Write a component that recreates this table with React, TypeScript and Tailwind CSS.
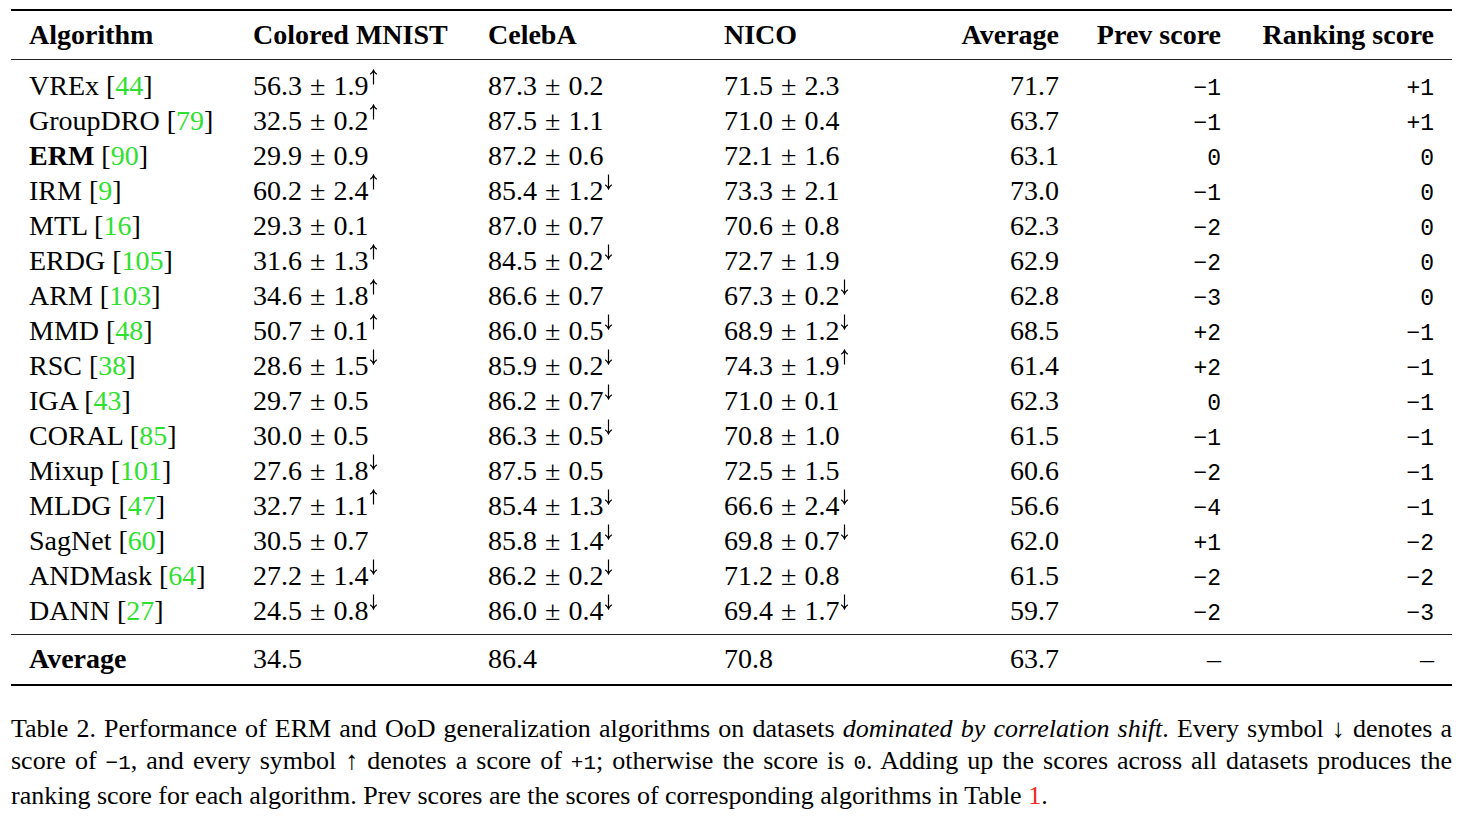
import React from "react";

type Arrow = "" | "u" | "d";
type Row = {
  name: string;
  ref: string;
  bold?: boolean;
  c1: string;
  a1: Arrow;
  c2: string;
  a2: Arrow;
  c3: string;
  a3: Arrow;
  avg: string;
  prev: string;
  rank: string;
};

const rows: Row[] = [
  { name: "VREx", ref: "44", c1: "56.3", a1: "u", c2: "87.3", a2: "", c3: "71.5", a3: "", avg: "71.7", prev: "−1", rank: "+1" },
  { name: "GroupDRO", ref: "79", c1: "32.5", a1: "u", c2: "87.5", a2: "", c3: "71.0", a3: "", avg: "63.7", prev: "−1", rank: "+1" },
  { name: "ERM", ref: "90", bold: true, c1: "29.9", a1: "", c2: "87.2", a2: "", c3: "72.1", a3: "", avg: "63.1", prev: "0", rank: "0" },
  { name: "IRM", ref: "9", c1: "60.2", a1: "u", c2: "85.4", a2: "d", c3: "73.3", a3: "", avg: "73.0", prev: "−1", rank: "0" },
  { name: "MTL", ref: "16", c1: "29.3", a1: "", c2: "87.0", a2: "", c3: "70.6", a3: "", avg: "62.3", prev: "−2", rank: "0" },
  { name: "ERDG", ref: "105", c1: "31.6", a1: "u", c2: "84.5", a2: "d", c3: "72.7", a3: "", avg: "62.9", prev: "−2", rank: "0" },
  { name: "ARM", ref: "103", c1: "34.6", a1: "u", c2: "86.6", a2: "", c3: "67.3", a3: "d", avg: "62.8", prev: "−3", rank: "0" },
  { name: "MMD", ref: "48", c1: "50.7", a1: "u", c2: "86.0", a2: "d", c3: "68.9", a3: "d", avg: "68.5", prev: "+2", rank: "−1" },
  { name: "RSC", ref: "38", c1: "28.6", a1: "d", c2: "85.9", a2: "d", c3: "74.3", a3: "u", avg: "61.4", prev: "+2", rank: "−1" },
  { name: "IGA", ref: "43", c1: "29.7", a1: "", c2: "86.2", a2: "d", c3: "71.0", a3: "", avg: "62.3", prev: "0", rank: "−1" },
  { name: "CORAL", ref: "85", c1: "30.0", a1: "", c2: "86.3", a2: "d", c3: "70.8", a3: "", avg: "61.5", prev: "−1", rank: "−1" },
  { name: "Mixup", ref: "101", c1: "27.6", a1: "d", c2: "87.5", a2: "", c3: "72.5", a3: "", avg: "60.6", prev: "−2", rank: "−1" },
  { name: "MLDG", ref: "47", c1: "32.7", a1: "u", c2: "85.4", a2: "d", c3: "66.6", a3: "d", avg: "56.6", prev: "−4", rank: "−1" },
  { name: "SagNet", ref: "60", c1: "30.5", a1: "", c2: "85.8", a2: "d", c3: "69.8", a3: "d", avg: "62.0", prev: "+1", rank: "−2" },
  { name: "ANDMask", ref: "64", c1: "27.2", a1: "d", c2: "86.2", a2: "d", c3: "71.2", a3: "", avg: "61.5", prev: "−2", rank: "−2" },
  { name: "DANN", ref: "27", c1: "24.5", a1: "d", c2: "86.0", a2: "d", c3: "69.4", a3: "d", avg: "59.7", prev: "−2", rank: "−3" },
];

const sds: string[][] = [
  ["1.9", "0.2", "2.3"],
  ["0.2", "1.1", "0.4"],
  ["0.9", "0.6", "1.6"],
  ["2.4", "1.2", "2.1"],
  ["0.1", "0.7", "0.8"],
  ["1.3", "0.2", "1.9"],
  ["1.8", "0.7", "0.2"],
  ["0.1", "0.5", "1.2"],
  ["1.5", "0.2", "1.9"],
  ["0.5", "0.7", "0.1"],
  ["0.5", "0.5", "1.0"],
  ["1.8", "0.5", "1.5"],
  ["1.1", "1.3", "2.4"],
  ["0.7", "1.4", "0.7"],
  ["1.4", "0.2", "0.8"],
  ["0.8", "0.4", "1.7"],
];

const MONO = '"Liberation Mono", "Courier New", monospace';

function ArrowMark({ dir }: { dir: Arrow }) {
  if (!dir) return null;
  return (
    <svg
      width="9"
      height="16"
      viewBox="0 0 9 16"
      className="inline-block align-top ml-[1px] mt-[1px]"
      fill="none"
      stroke="#000"
      strokeWidth="1.2"
    >
      {dir === "u" ? (
        <>
          <path d="M4.5 1.5 L4.5 15.5" />
          <path d="M1.2 5.2 Q3.6 3.6 4.5 1.2 Q5.4 3.6 7.8 5.2" />
        </>
      ) : (
        <>
          <path d="M4.5 0.5 L4.5 14.5" />
          <path d="M1.2 10.8 Q3.6 12.4 4.5 14.8 Q5.4 12.4 7.8 10.8" />
        </>
      )}
    </svg>
  );
}

function Cell({ m, s, a }: { m: string; s: string; a: Arrow }) {
  return (
    <div className="whitespace-nowrap">
      {m}
      <span className="mx-[8px]">±</span>
      {s}
      <ArrowMark dir={a} />
    </div>
  );
}

const grid =
  "grid grid-cols-[224px_235px_236px_176px_159px_162px_213px] items-baseline px-[18px]";

export default function App() {
  return (
    <div
      className="w-[1464px] h-[818px] bg-white text-black overflow-hidden"
      style={{ fontFamily: '"Liberation Serif", "Times New Roman", serif' }}
    >
      <div className="ml-[11px] mt-[9px] w-[1441px]">
        <div className="border-t-2 border-black" />
        {/* header */}
        <div className={`${grid} pt-[6px] pb-[7px] text-[28px] leading-[35px] font-bold`}>
          <div>Algorithm</div>
          <div>Colored MNIST</div>
          <div>CelebA</div>
          <div>NICO</div>
          <div className="text-right">Average</div>
          <div className="text-right">Prev score</div>
          <div className="text-right">Ranking score</div>
        </div>
        <div className="border-t border-[#222]" />
        <div className="pt-[8px] pb-[6px]">
          {rows.map((r, i) => (
            <div key={r.name} className={`${grid} h-[35px] text-[28px] leading-[35px]`}>
              <div className="whitespace-nowrap">
                <span className={r.bold ? "font-bold" : ""}>{r.name}</span>{" "}
                [<span className="text-[#2fe02f]">{r.ref}</span>]
              </div>
              <Cell m={r.c1} s={sds[i][0]} a={r.a1} />
              <Cell m={r.c2} s={sds[i][1]} a={r.a2} />
              <Cell m={r.c3} s={sds[i][2]} a={r.a3} />
              <div className="text-right">{r.avg}</div>
              <div className="text-right text-[23px]" style={{ fontFamily: MONO }}>
                {r.prev}
              </div>
              <div className="text-right text-[23px]" style={{ fontFamily: MONO }}>
                {r.rank}
              </div>
            </div>
          ))}
        </div>
        <div className="border-t border-[#222]" />
        <div className={`${grid} pt-[6px] pb-[8px] text-[28px] leading-[35px]`}>
          <div className="font-bold">Average</div>
          <div>34.5</div>
          <div>86.4</div>
          <div>70.8</div>
          <div className="text-right">63.7</div>
          <div className="text-right">–</div>
          <div className="text-right">–</div>
        </div>
        <div className="border-t-2 border-black" />

        {/* caption */}
        <div className="mt-[27px] text-[26px] leading-[32px]">
          <div className="text-justify [text-align-last:justify] whitespace-nowrap">
            Table 2. Performance of ERM and OoD generalization algorithms on datasets{" "}
            <i>dominated by correlation shift</i>. Every symbol ↓ denotes a
          </div>
          <div className="text-justify [text-align-last:justify] whitespace-nowrap">
            score of{" "}
            <span className="text-[21px]" style={{ fontFamily: MONO }}>
              −1
            </span>
            , and every symbol ↑ denotes a score of{" "}
            <span className="text-[21px]" style={{ fontFamily: MONO }}>
              +1
            </span>
            ; otherwise the score is{" "}
            <span className="text-[21px]" style={{ fontFamily: MONO }}>
              0
            </span>
            . Adding up the scores across all datasets produces the
          </div>
          <div className="whitespace-nowrap">
            ranking score for each algorithm. Prev scores are the scores of corresponding
            algorithms in Table <span className="text-[#f0281e]">1</span>.
          </div>
        </div>
      </div>
    </div>
  );
}
